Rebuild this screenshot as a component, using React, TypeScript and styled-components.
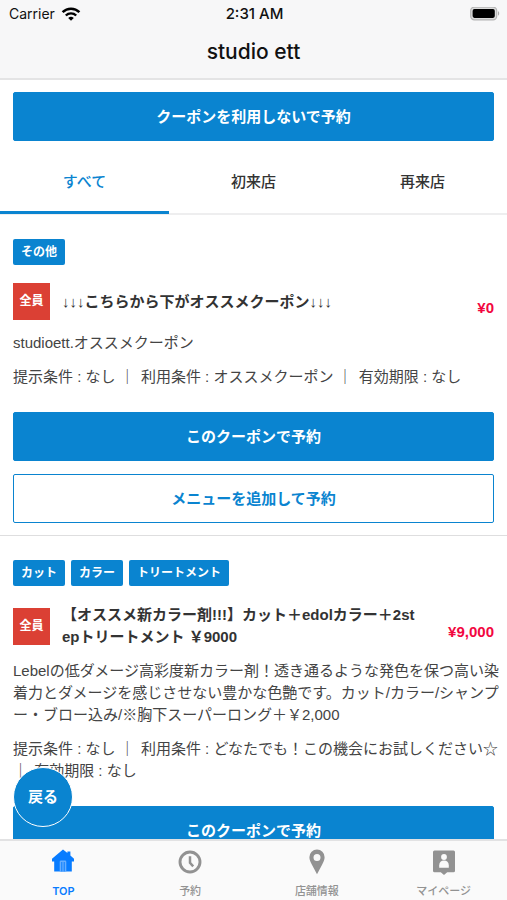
import React from "react";
import styled, { createGlobalStyle, css } from "styled-components";

const BLUE = "#0a84d0";
const TEXT_FONT = '"Liberation Sans", "Noto Sans CJK JP", sans-serif';
const SYSTEM_FONT = 'Inter, "Noto Sans CJK JP", sans-serif';

const GlobalStyle = createGlobalStyle`
  *, *::before, *::after { box-sizing: border-box; }
  body { margin: 0; background: #fff; }
  button { font: inherit; cursor: pointer; }
  h1, h2, p { margin: 0; }
`;

const Screen = styled.div`
  display: flex;
  flex-direction: column;
  height: 100vh;
  background: #fff;
  color: #444;
  font: 400 15px/22px ${TEXT_FONT};
`;

const Header = styled.header`
  flex: none;
  background: #f7f7f8;
  border-bottom: 2px solid #e4e4e5;
  color: #111;
  font-family: ${SYSTEM_FONT};
`;

const StatusBar = styled.div`
  display: grid;
  grid-template-columns: 1fr auto 1fr;
  align-items: center;
  height: 28px;
  padding: 0 7px 0 9px;
  font-size: 14px;
`;

const Carrier = styled.span`
  display: flex;
  align-items: center;
  gap: 6px;
`;

const Clock = styled.span`
  font-size: 15px;
  font-weight: 500;
`;

const BatterySlot = styled.span`
  display: flex;
  justify-content: flex-end;
`;

const PageTitle = styled.h1`
  height: 50px;
  font-size: 21px;
  font-weight: 500;
  line-height: 48px;
  text-align: center;
`;

const Stage = styled.div`
  position: relative;
  flex: 1;
  min-height: 0;
`;

const Scroller = styled.main`
  height: 100%;
  overflow-y: auto;
  scrollbar-width: none;
`;

const ActionButton = styled.button<{ $outline?: boolean }>`
  display: block;
  width: 100%;
  height: 49px;
  padding: 0;
  border: 1px solid ${BLUE};
  border-radius: 2px;
  background: ${(p) => (p.$outline ? "#fff" : BLUE)};
  color: ${(p) => (p.$outline ? BLUE : "#fff")};
  font-size: 15px;
  font-weight: 700;
`;

const TopAction = styled.div`
  padding: 12px 13px;
`;

const Tabs = styled.div`
  display: grid;
  grid-template-columns: repeat(3, 1fr);
  height: 62px;
  box-shadow: inset 0 -2px #eeeeef;
`;

const Tab = styled.button<{ $active: boolean }>`
  height: 61px;
  padding: 0;
  border: 0;
  border-bottom: 3px solid transparent;
  background: none;
  color: #333;
  font-size: 15px;
  font-weight: 500;
  ${(p) =>
    p.$active &&
    css`
      border-bottom-color: ${BLUE};
      color: ${BLUE};
    `}
`;

const Card = styled.article`
  padding: 24px 13px 12px;
  border-bottom: 1px solid #dededf;
`;

const Chips = styled.div`
  display: flex;
  flex-wrap: wrap;
  gap: 6px;
  margin-bottom: 18px;
`;

const Chip = styled.span`
  height: 26px;
  padding: 0 8px;
  border-radius: 2px;
  background: ${BLUE};
  color: #fff;
  font-size: 12px;
  font-weight: 700;
  line-height: 26px;
`;

const Summary = styled.div`
  display: grid;
  grid-template-columns: 37px 1fr 64px;
  column-gap: 12px;
  align-items: center;
`;

const Audience = styled.span`
  height: 37px;
  background: #db4034;
  color: #fff;
  font-size: 12px;
  font-weight: 700;
  line-height: 36px;
  text-align: center;
`;

const CouponTitle = styled.h2`
  color: #333;
  font-size: 15px;
  font-weight: 700;
  line-height: 22px;
  word-break: break-all;
`;

const Price = styled.strong`
  padding-top: 12px;
  color: #f2073f;
  text-align: right;
`;

/* Long copy may run through the card's side padding up to the screen edge. */
const Copy = styled.p`
  margin: 12px -13px 0 0;
`;

const Separator = styled.span`
  margin-right: 2px;
`;

const Actions = styled.div`
  display: grid;
  gap: 13px;
  margin-top: 24px;
`;

const BackButton = styled.button`
  position: absolute;
  left: 13px;
  bottom: 12px;
  width: 60px;
  height: 60px;
  padding: 0;
  border: 1px solid #fff;
  border-radius: 50%;
  background: ${BLUE};
  color: #fff;
  font-weight: 700;
`;

const TabBar = styled.nav`
  display: grid;
  flex: none;
  grid-template-columns: repeat(4, 1fr);
  height: 61px;
  border-top: 2px solid #e2e2e3;
  background: #fafafa;
`;

const TabBarLink = styled.a<{ $active?: boolean }>`
  display: flex;
  flex-direction: column;
  align-items: center;
  padding-top: 8px;
  color: ${(p) => (p.$active ? "#087cff" : "#929292")};
  font-family: ${SYSTEM_FONT};
  font-size: 11px;
  font-weight: ${(p) => (p.$active ? 600 : 500)};
  line-height: 16px;
  text-decoration: none;

  svg {
    margin-bottom: 8px;
  }
`;

const WifiIcon = () => (
  <svg width="20" height="14" viewBox="0 0 20 14" fill="none" aria-hidden="true">
    <path d="M1.6 5.2a12 12 0 0 1 16.8 0" stroke="#000" strokeWidth="2.5" />
    <path d="M4.8 8.5a7.4 7.4 0 0 1 10.4 0" stroke="#000" strokeWidth="2.4" />
    <path d="M10 13.8 7.2 11a4 4 0 0 1 5.6 0Z" fill="#000" />
  </svg>
);

const BatteryIcon = () => (
  <svg width="30" height="14" viewBox="0 0 30 14" aria-hidden="true">
    <rect x="0.7" y="0.2" width="26" height="12.6" rx="3.6" fill="#dcdcdc" stroke="#b4b4b4" strokeWidth="1.2" />
    <rect x="2.6" y="2.1" width="22.2" height="8.8" rx="1.8" fill="#000" />
    <path d="M28 4.3c1.6.6 1.6 3.8 0 4.4Z" fill="#aaa" />
  </svg>
);

const HomeIcon = () => (
  <svg width="24" height="26" viewBox="0 0 24 26" fill="currentColor" aria-hidden="true">
    <path d="M12 .4 16.4 4V2.6h3v3.9L23 9.8v2.6h-2.2v10H3.2v-10H1V9.8Z" />
    <path d="M8.7 22.4V12.8q0-1.2 1.2-1.2h4.2q1.2 0 1.2 1.2v9.6" fill="#66aeff" />
    <path d="M10.8 13v9.4M13.2 13v9.4" stroke="currentColor" strokeWidth="1" />
  </svg>
);

const ClockIcon = () => (
  <svg width="24" height="26" viewBox="0 0 24 26" fill="none" stroke="currentColor" aria-hidden="true">
    <circle cx="12" cy="13" r="10" strokeWidth="2.9" />
    <path d="M12 7.2v6.6l3.2 3.6" strokeWidth="2.5" />
  </svg>
);

const PinIcon = () => (
  <svg width="24" height="26" viewBox="0 0 24 26" fill="currentColor" aria-hidden="true">
    <path
      fillRule="evenodd"
      d="M12 .5a7.6 7.6 0 0 0-7.6 7.7c0 2.4 1 4.6 2.4 7.2L12 25.2l5.2-9.8c1.4-2.6 2.4-4.8 2.4-7.2A7.6 7.6 0 0 0 12 .5Zm0 4.4a3.5 3.5 0 1 1 0 7 3.5 3.5 0 0 1 0-7Z"
    />
  </svg>
);

const ProfileIcon = () => (
  <svg width="24" height="26" viewBox="0 0 24 26" fill="currentColor" aria-hidden="true">
    <path d="M2.5 1.4h19q1.5 0 1.5 1.5v18.8q0 1.5-1.5 1.5h-6.3L12 26l-3.2-2.8H2.5Q1 23.2 1 21.7V2.9q0-1.5 1.5-1.5Z" />
    <circle cx="12" cy="8" r="2.9" fill="#fafafa" />
    <path d="M7.2 18.8v-2.6c0-2.8 1.9-4.6 4.8-4.6s4.8 1.8 4.8 4.6v2.6Z" fill="#fafafa" />
  </svg>
);

type Coupon = {
  tags: string[];
  title: string;
  price: string;
  description: string;
  terms: string[];
};

const coupons: Coupon[] = [
  {
    tags: ["その他"],
    title: "↓↓↓こちらから下がオススメクーポン↓↓↓",
    price: "¥0",
    description: "studioett.オススメクーポン",
    terms: ["提示条件 : なし", "利用条件 : オススメクーポン", "有効期限 : なし"],
  },
  {
    tags: ["カット", "カラー", "トリートメント"],
    title: "【オススメ新カラー剤!!!】カット＋edolカラー＋2stepトリートメント ￥9000",
    price: "¥9,000",
    description:
      "Lebelの低ダメージ高彩度新カラー剤！透き通るような発色を保つ高い染着力とダメージを感じさせない豊かな色艶です。カット/カラー/シャンプー・ブロー込み/※胸下スーパーロング＋￥2,000",
    terms: [
      "提示条件 : なし",
      "利用条件 : どなたでも！この機会にお試しください☆",
      "有効期限 : なし",
    ],
  },
];

const CouponCard = ({ coupon }: { coupon: Coupon }) => (
  <Card>
    <Chips>
      {coupon.tags.map((tag) => (
        <Chip key={tag}>{tag}</Chip>
      ))}
    </Chips>
    <Summary>
      <Audience>全員</Audience>
      <CouponTitle>{coupon.title}</CouponTitle>
      <Price>{coupon.price}</Price>
    </Summary>
    <Copy>{coupon.description}</Copy>
    <Copy>
      {coupon.terms.map((term, i) => (
        <React.Fragment key={term}>
          {i > 0 && (
            <>
              {" "}
              <Separator>｜</Separator>{" "}
            </>
          )}
          {term}
        </React.Fragment>
      ))}
    </Copy>
    <Actions>
      <ActionButton type="button">このクーポンで予約</ActionButton>
      <ActionButton type="button" $outline>
        メニューを追加して予約
      </ActionButton>
    </Actions>
  </Card>
);

const filters = ["すべて", "初来店", "再来店"];

const destinations = [
  { label: "TOP", Icon: HomeIcon },
  { label: "予約", Icon: ClockIcon },
  { label: "店舗情報", Icon: PinIcon },
  { label: "マイページ", Icon: ProfileIcon },
];

export default function App() {
  const [filter, setFilter] = React.useState(filters[0]);

  return (
    <Screen lang="ja">
      <GlobalStyle />
      <Header>
        <StatusBar>
          <Carrier>
            Carrier
            <WifiIcon />
          </Carrier>
          <Clock>2:31 AM</Clock>
          <BatterySlot>
            <BatteryIcon />
          </BatterySlot>
        </StatusBar>
        <PageTitle>studio ett</PageTitle>
      </Header>
      <Stage>
        <Scroller>
          <TopAction>
            <ActionButton type="button">クーポンを利用しないで予約</ActionButton>
          </TopAction>
          <Tabs role="tablist">
            {filters.map((name) => (
              <Tab
                key={name}
                type="button"
                role="tab"
                aria-selected={name === filter}
                $active={name === filter}
                onClick={() => setFilter(name)}
              >
                {name}
              </Tab>
            ))}
          </Tabs>
          {coupons.map((coupon) => (
            <CouponCard key={coupon.title} coupon={coupon} />
          ))}
        </Scroller>
        <BackButton type="button">戻る</BackButton>
      </Stage>
      <TabBar>
        {destinations.map(({ label, Icon }, i) => (
          <TabBarLink key={label} href="#" $active={i === 0}>
            <Icon />
            {label}
          </TabBarLink>
        ))}
      </TabBar>
    </Screen>
  );
}
